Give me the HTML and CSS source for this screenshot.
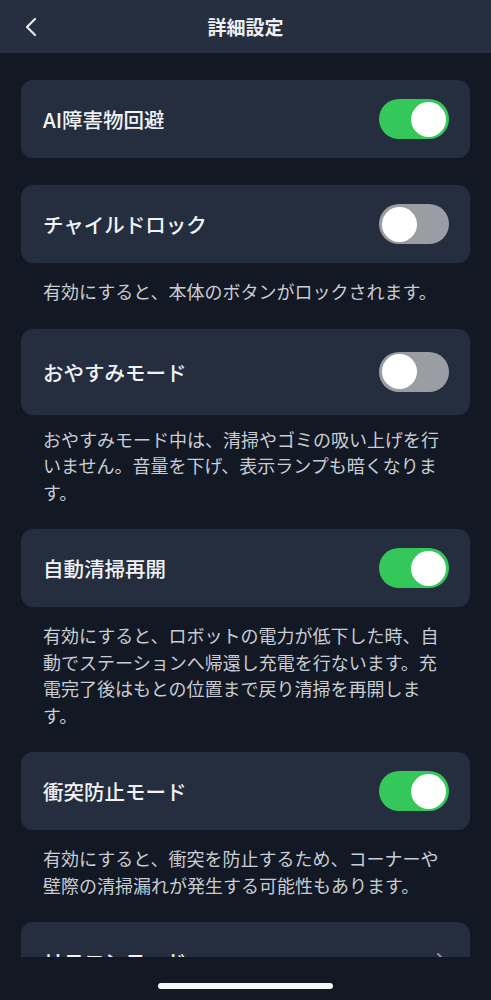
FILE: index.html
```html
<!DOCTYPE html>
<html lang="ja">
<head>
    <meta charset="UTF-8">
    <meta name="viewport" content="width=device-width, initial-scale=1.0">
    <title>詳細設定</title>
    <link rel="stylesheet" href="styles.css">
</head>
<body>
    <header class="top-bar">
        <svg class="back-icon" width="16" height="20" viewBox="0 0 16 20">
            <polyline points="12,2 4,10 12,18" fill="none" stroke="#e6e9ee" stroke-width="2.2" stroke-linecap="round" stroke-linejoin="round"/>
        </svg>
        <h1 class="page-title">詳細設定</h1>
    </header>

    <main class="settings">
        <div class="card">
            <span class="card-title">AI障害物回避</span>
            <span class="switch on"><span class="knob"></span></span>
        </div>

        <div class="card">
            <span class="card-title">チャイルドロック</span>
            <span class="switch"><span class="knob"></span></span>
        </div>
        <p class="desc">有効にすると、本体のボタンがロックされます。</p>

        <div class="card tall">
            <span class="card-title">おやすみモード</span>
            <span class="switch"><span class="knob"></span></span>
        </div>
        <p class="desc after-tall">おやすみモード中は、清掃やゴミの吸い上げを行いません。音量を下げ、表示ランプも暗くなります。</p>

        <div class="card">
            <span class="card-title">自動清掃再開</span>
            <span class="switch on"><span class="knob"></span></span>
        </div>
        <p class="desc">有効にすると、ロボットの電力が低下した時、自動でステーションへ帰還し充電を行ないます。充電完了後はもとの位置まで戻り清掃を再開します。</p>

        <div class="card">
            <span class="card-title">衝突防止モード</span>
            <span class="switch on"><span class="knob"></span></span>
        </div>
        <p class="desc">有効にすると、衝突を防止するため、コーナーや壁際の清掃漏れが発生する可能性もあります。</p>

        <div class="card">
            <span class="card-title">リモコンモード</span>
            <svg class="chevron" width="12" height="18" viewBox="0 0 12 18">
                <polyline points="3,2 10,9 3,16" fill="none" stroke="#8d939c" stroke-width="2" stroke-linecap="round" stroke-linejoin="round"/>
            </svg>
        </div>
    </main>

    <div class="home-area">
        <div class="home-indicator"></div>
    </div>
</body>
</html>
```

FILE: styles.css
```css
body {
    font-family: "Noto Sans CJK JP", "Noto Sans", sans-serif;
    background: #121824;
    color: #eef0f3;
    margin: 0;
    padding: 0;
}
.top-bar {
    height: 53px;
    background: #262f3f;
    display: flex;
    align-items: center;
    justify-content: center;
    position: relative;
}
.back-icon {
    position: absolute;
    left: 23px;
    top: 17px;
}
.page-title {
    margin: 0;
    font-size: 19px;
    font-weight: 700;
    color: #eef0f3;
}
.settings {
    padding: 27px 21px 0;
}
.card {
    height: 78px;
    background: #252e3e;
    border-radius: 12px;
    display: flex;
    align-items: center;
    justify-content: space-between;
    padding: 0 21px 0 22px;
    margin-bottom: 27px;
}
.card.tall { height: 86px; }
.card + .desc { margin-top: -27px; }
.card-title {
    font-size: 20.5px;
    font-weight: 500;
    color: #f1f3f6;
}
.switch {
    width: 70px;
    height: 40px;
    border-radius: 20px;
    background: #9a9ea4;
    display: flex;
    align-items: center;
    padding: 0 3px;
    box-sizing: border-box;
}
.switch.on {
    background: #34c759;
    justify-content: flex-end;
}
.knob {
    width: 35px;
    height: 35px;
    border-radius: 50%;
    background: #fff;
}
.chevron { margin-right: 2px; }
.desc {
    margin: 0;
    padding: 15px 22px 24px;
    font-size: 18px;
    line-height: 26.5px;
    color: #c9cdd3;
}
.desc.after-tall { padding-top: 11px; }
.home-area {
    position: fixed;
    left: 0;
    right: 0;
    bottom: 0;
    height: 43px;
    background: #121824;
    display: flex;
    justify-content: center;
}
.home-indicator {
    width: 175px;
    height: 6px;
    border-radius: 3px;
    background: #f4f5f7;
    margin-top: 26px;
}
```
